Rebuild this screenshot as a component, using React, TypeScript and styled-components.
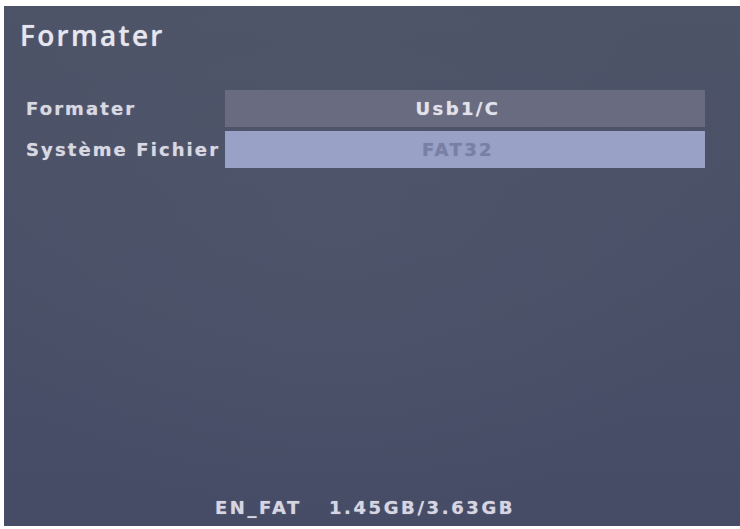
import React from 'react';
import styled, { createGlobalStyle } from 'styled-components';

const GlobalStyle = createGlobalStyle`
    html, body {
        margin: 0;
        padding: 0;
        background: #ffffff;
    }
    #root {
        width: 740px;
        height: 529px;
    }
`;

const Screen = styled.div`
    box-sizing: border-box;
    margin: 6px 0 3px 4px;
    width: 736px;
    height: 520px;
    display: flex;
    flex-direction: column;
    padding: 12px 0 6px 16px;
    background:
        radial-gradient(ellipse at 45% 40%, rgba(86, 92, 112, 0.35) 0%, rgba(0, 0, 0, 0) 70%),
        linear-gradient(180deg, #4d5468 0%, #4a5067 45%, #464c66 100%);
    font-family: "DejaVu Sans", "Liberation Sans", sans-serif;
    color: #e4e4ec;
`;

const Title = styled.h1`
    margin: 0;
    font-family: "Open Sans", "Liberation Sans", sans-serif;
    font-size: 28px;
    line-height: 34px;
    font-weight: 600;
    letter-spacing: 2.3px;
    color: #e6e6ee;
    text-shadow: 0 0 1px rgba(230, 230, 240, 0.7);
`;

const Form = styled.div`
    margin-top: 38px;
    margin-left: 6px;
    display: flex;
    flex-direction: column;
    gap: 4px;
`;

const Row = styled.div`
    display: grid;
    grid-template-columns: 199px 480px;
    height: 37px;
    align-items: stretch;
`;

const Label = styled.div`
    display: flex;
    align-items: center;
    font-size: 18px;
    font-weight: 700;
    letter-spacing: 2.1px;
    color: #d8d8e2;
    white-space: nowrap;
    text-shadow: 0 0 1px rgba(220, 220, 230, 0.6);
`;

const Value = styled.div<{ $focused?: boolean }>`
    display: flex;
    align-items: center;
    justify-content: center;
    padding-right: 14px;
    font-size: 18px;
    font-weight: 700;
    letter-spacing: 2.4px;
    background: ${ (p) => (p.$focused ? '#9aa1c6' : '#696b80') };
    color: ${ (p) => (p.$focused ? '#7880a6' : '#e2e2ea') };
    text-shadow: 0 0 1px ${ (p) => (p.$focused ? 'rgba(110, 118, 160, 0.6)' : 'rgba(230, 230, 240, 0.6)') };
`;

const Spacer = styled.div`
    flex: 1;
`;

const Footer = styled.div`
    display: flex;
    justify-content: center;
    gap: 27px;
    padding-right: 30px;
    font-size: 18px;
    font-weight: 700;
    letter-spacing: 2.6px;
    line-height: 24px;
    color: #d6d6e2;
    text-shadow: 0 0 1px rgba(220, 220, 230, 0.6);
`;

const rows = [
    { label: 'Formater', value: 'Usb1/C', focused: false },
    { label: 'Système Fichier', value: 'FAT32', focused: true },
];

const App = () => {
    return (
        <>
            <GlobalStyle />
            <Screen>
                <Title>Formater</Title>
                <Form>
                    { rows.map((row) => (
                        <Row key={ row.label }>
                            <Label>{ row.label }</Label>
                            <Value $focused={ row.focused }>{ row.value }</Value>
                        </Row>
                    )) }
                </Form>
                <Spacer />
                <Footer>
                    <span>EN_FAT</span>
                    <span>1.45GB/3.63GB</span>
                </Footer>
            </Screen>
        </>
    );
};

export default App;
